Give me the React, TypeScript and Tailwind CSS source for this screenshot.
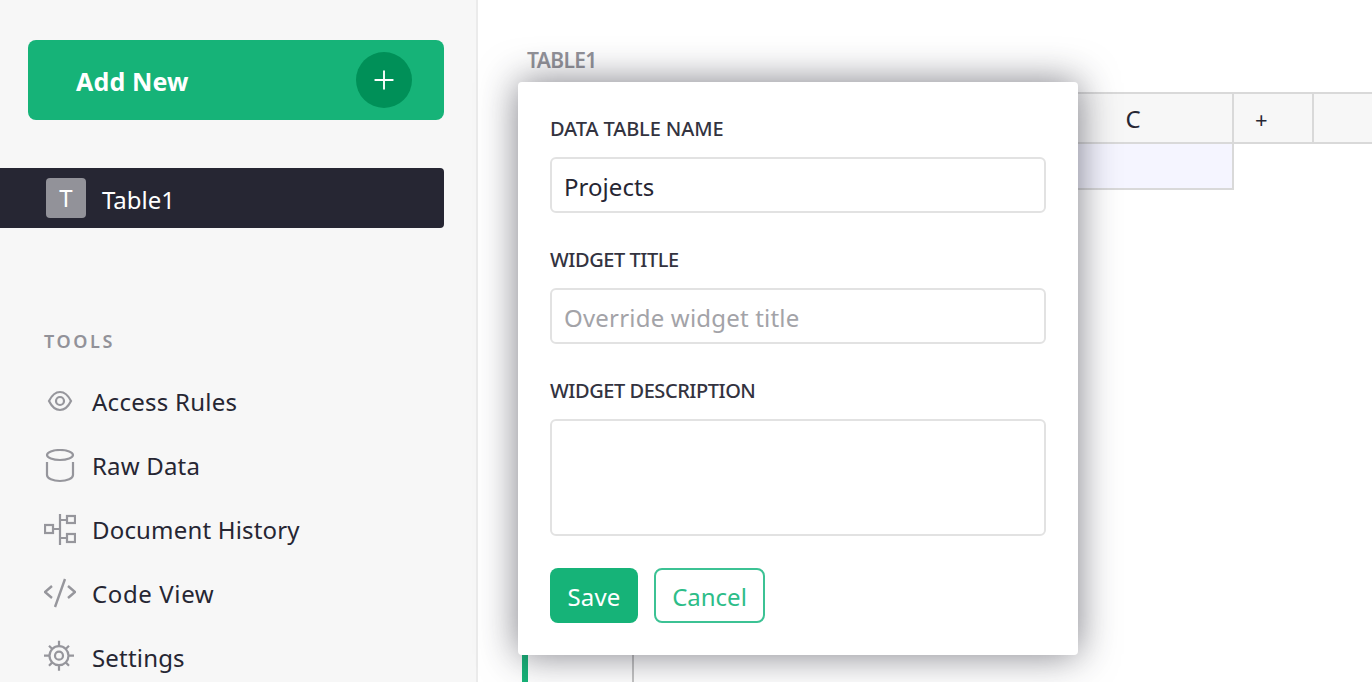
import { Plus } from "lucide-react"

const font = "font-['Noto_Sans','Open_Sans',sans-serif]"

function EyeIcon() {
    return (
        <svg width="32" height="32" viewBox="0 0 32 32" fill="none" stroke="#96969c" strokeWidth="2.2">
            <path d="M5 15C8 9 12 6 16 6s8 3 11 9c-3 6-7 9-11 9s-8-3-11-9z" />
            <circle cx="16" cy="15" r="4" />
        </svg>
    )
}

function CylinderIcon() {
    return (
        <svg width="32" height="34" viewBox="0 0 32 34" fill="none" stroke="#96969c" strokeWidth="2.2">
            <ellipse cx="16" cy="6" rx="13" ry="5" />
            <path d="M3 13v13c0 3.500 6 6 13 6s13-2.500 13-6V13" />
        </svg>
    )
}

function TreeIcon() {
    return (
        <svg width="32" height="32" viewBox="0 0 32 32" fill="none" stroke="#96969c" strokeWidth="2.2">
            <rect x="1" y="11" width="8" height="8" />
            <rect x="23" y="2" width="8" height="7" />
            <rect x="23" y="20" width="8" height="8" />
            <path d="M16 0v31M10 15h5M17 6h5M17 24h5" />
        </svg>
    )
}

function CodeIcon() {
    return (
        <svg width="32" height="32" viewBox="0 0 32 32" fill="none" stroke="#96969c" strokeWidth="2.4">
            <path d="M8 8l-7 6 7 6M24 8l7 6-7 6M21 1l-10 28" />
        </svg>
    )
}

function GearIcon() {
    return (
        <svg width="32" height="32" viewBox="0 0 32 32" fill="none" stroke="#96969c" strokeWidth="2.2" className="overflow-visible">
            <circle cx="15" cy="13.700" r="9.500" />
            <circle cx="15" cy="13.700" r="4" />
            <path d="M15 -1.300v5.500M15 23.200v5.500M0 13.700h5.500M24.500 13.700h5.500M5 3.700l3.300 3.300M21.700 20.400l3.300 3.300M25 3.700l-3.300 3.300M8.300 20.400l-3.300 3.300" />
        </svg>
    )
}

const tools = [
    { label: "Access Rules", icon: <EyeIcon />, tracking: "tracking-[0.26px]" },
    { label: "Raw Data", icon: <CylinderIcon />, tracking: "tracking-[0.18px]" },
    { label: "Document History", icon: <TreeIcon />, tracking: "tracking-[0.18px]" },
    { label: "Code View", icon: <CodeIcon />, tracking: "tracking-[0.62px]" },
    { label: "Settings", icon: <GearIcon />, tracking: "tracking-[0.18px]" },
]

function Sidebar() {
    return (
        <div className="w-[478px] h-full shrink-0 bg-[#f7f7f7] border-r-2 border-[#ebebeb] overflow-hidden">
            {/* Add new button */}
            <div className="mt-10 ml-7 w-[416px] h-20 bg-[#16b378] rounded-lg flex items-center justify-between pl-12 pr-8">
                <span className="pt-1 text-[25px] font-bold text-white tracking-[0.15px]">Add New</span>
                <div className="w-14 h-14 rounded-full bg-[#009058] flex items-center justify-center">
                    <Plus size={30} strokeWidth={1.5} color="white" />
                </div>
            </div>

            {/* Active page */}
            <div className="mt-12 w-[444px] h-[60px] bg-[#262633] rounded-r flex items-center pl-[46px]">
                <div className="w-10 h-10 rounded bg-[#929299] text-white text-[24px] flex items-center justify-center">T</div>
                <span className="ml-4 pt-1 text-[24px] text-white tracking-[-0.05px]">Table1</span>
            </div>

            {/* Tools */}
            <div className="mt-[98px] ml-11 text-[18px] font-semibold text-[#929299] tracking-[2.6px] leading-[30px]">TOOLS</div>
            <div className="mt-[14px] flex flex-col">
                {tools.map((t) => (
                    <div key={t.label} className="h-16 flex items-center pl-11">
                        <div className="w-8 flex items-center justify-center">{t.icon}</div>
                        <span className={`ml-4 text-[24px] text-[#262633] ${t.tracking}`}>{t.label}</span>
                    </div>
                ))}
            </div>
        </div>
    )
}

function Grid() {
    return (
        <div className="flex-1 relative overflow-hidden pl-[49px]">
            <div className="mt-12 h-[44px] text-[21px] leading-6 font-semibold text-[#929299] tracking-[-0.65px]">TABLE1</div>
            <div className="flex h-[52px] border-y-2 border-[#d9d9d9] bg-[#f7f7f7] text-[24px] text-[#262633]">
                <div className="w-[107px] shrink-0 border-r-2 border-[#d9d9d9]"></div>
                <div className="w-[200px] shrink-0 border-r-2 border-[#d9d9d9]"></div>
                <div className="w-[200px] shrink-0 border-r-2 border-[#d9d9d9]"></div>
                <div className="w-[200px] shrink-0 border-r-2 border-[#d9d9d9] flex items-center justify-center pt-0.5">C</div>
                <div className="w-20 shrink-0 border-r-2 border-[#d9d9d9] flex items-center pl-[21px] pt-0.5 text-[22px]">+</div>
                <div className="flex-1"></div>
            </div>
            <div className="flex h-[46px]">
                <div className="w-[707px] shrink-0 bg-[#f5f5ff] border-r-2 border-b-2 border-[#d9d9d9]"></div>
            </div>
            <div className="relative w-[107px] h-[600px] border-r-2 border-[#c4c4c4]">
                <div className="absolute left-[-5px] top-0 bottom-0 w-[6px] bg-[#16b378]"></div>
            </div>
        </div>
    )
}

function Field({ label, tracking, children }: { label: string; tracking: string; children: React.ReactNode }) {
    return (
        <div>
            <div className={`text-[20px] leading-[28px] font-medium text-[#33333f] ${tracking}`}>{label}</div>
            <div className="mt-[14px]">{children}</div>
        </div>
    )
}

function Popup() {
    return (
        <div className="absolute left-[518px] top-[82px] w-[560px] h-[573px] bg-white rounded shadow-[0_0_38px_rgba(38,38,51,0.6)] px-8 pt-[33px]">
            <div className="flex flex-col gap-[33px]">
                <Field label="DATA TABLE NAME" tracking="tracking-[-0.12px]">
                    <div className="h-14 border-2 border-[#e2e2e2] rounded-md flex items-center pl-3 pt-1 text-[24px] text-[#262633] tracking-[0.05px]">Projects</div>
                </Field>
                <Field label="WIDGET TITLE" tracking="tracking-[-0.45px]">
                    <div className="h-14 border-2 border-[#e2e2e2] rounded-md flex items-center pl-3 pt-1 text-[24px] text-[#a3a3a8] tracking-[0.2px]">Override widget title</div>
                </Field>
                <Field label="WIDGET DESCRIPTION" tracking="tracking-[-0.45px]">
                    <div className="h-[117px] border-2 border-[#e2e2e2] rounded-md"></div>
                </Field>
            </div>
            <div className="mt-[32px] flex gap-4">
                <div className="w-[88px] h-[55px] bg-[#16b378] rounded-lg flex items-center justify-center pt-0.5 text-[24px] text-white tracking-[0.2px]">Save</div>
                <div className="w-[111px] h-[55px] border-2 border-[#3cc294] rounded-lg flex items-center justify-center pt-0.5 text-[24px] text-[#2dbd88]">Cancel</div>
            </div>
        </div>
    )
}

export default function App() {
    return (
        <div className={`relative flex w-[1372px] h-[682px] bg-white overflow-hidden ${font}`}>
            <Sidebar />
            <Grid />
            <Popup />
        </div>
    )
}
